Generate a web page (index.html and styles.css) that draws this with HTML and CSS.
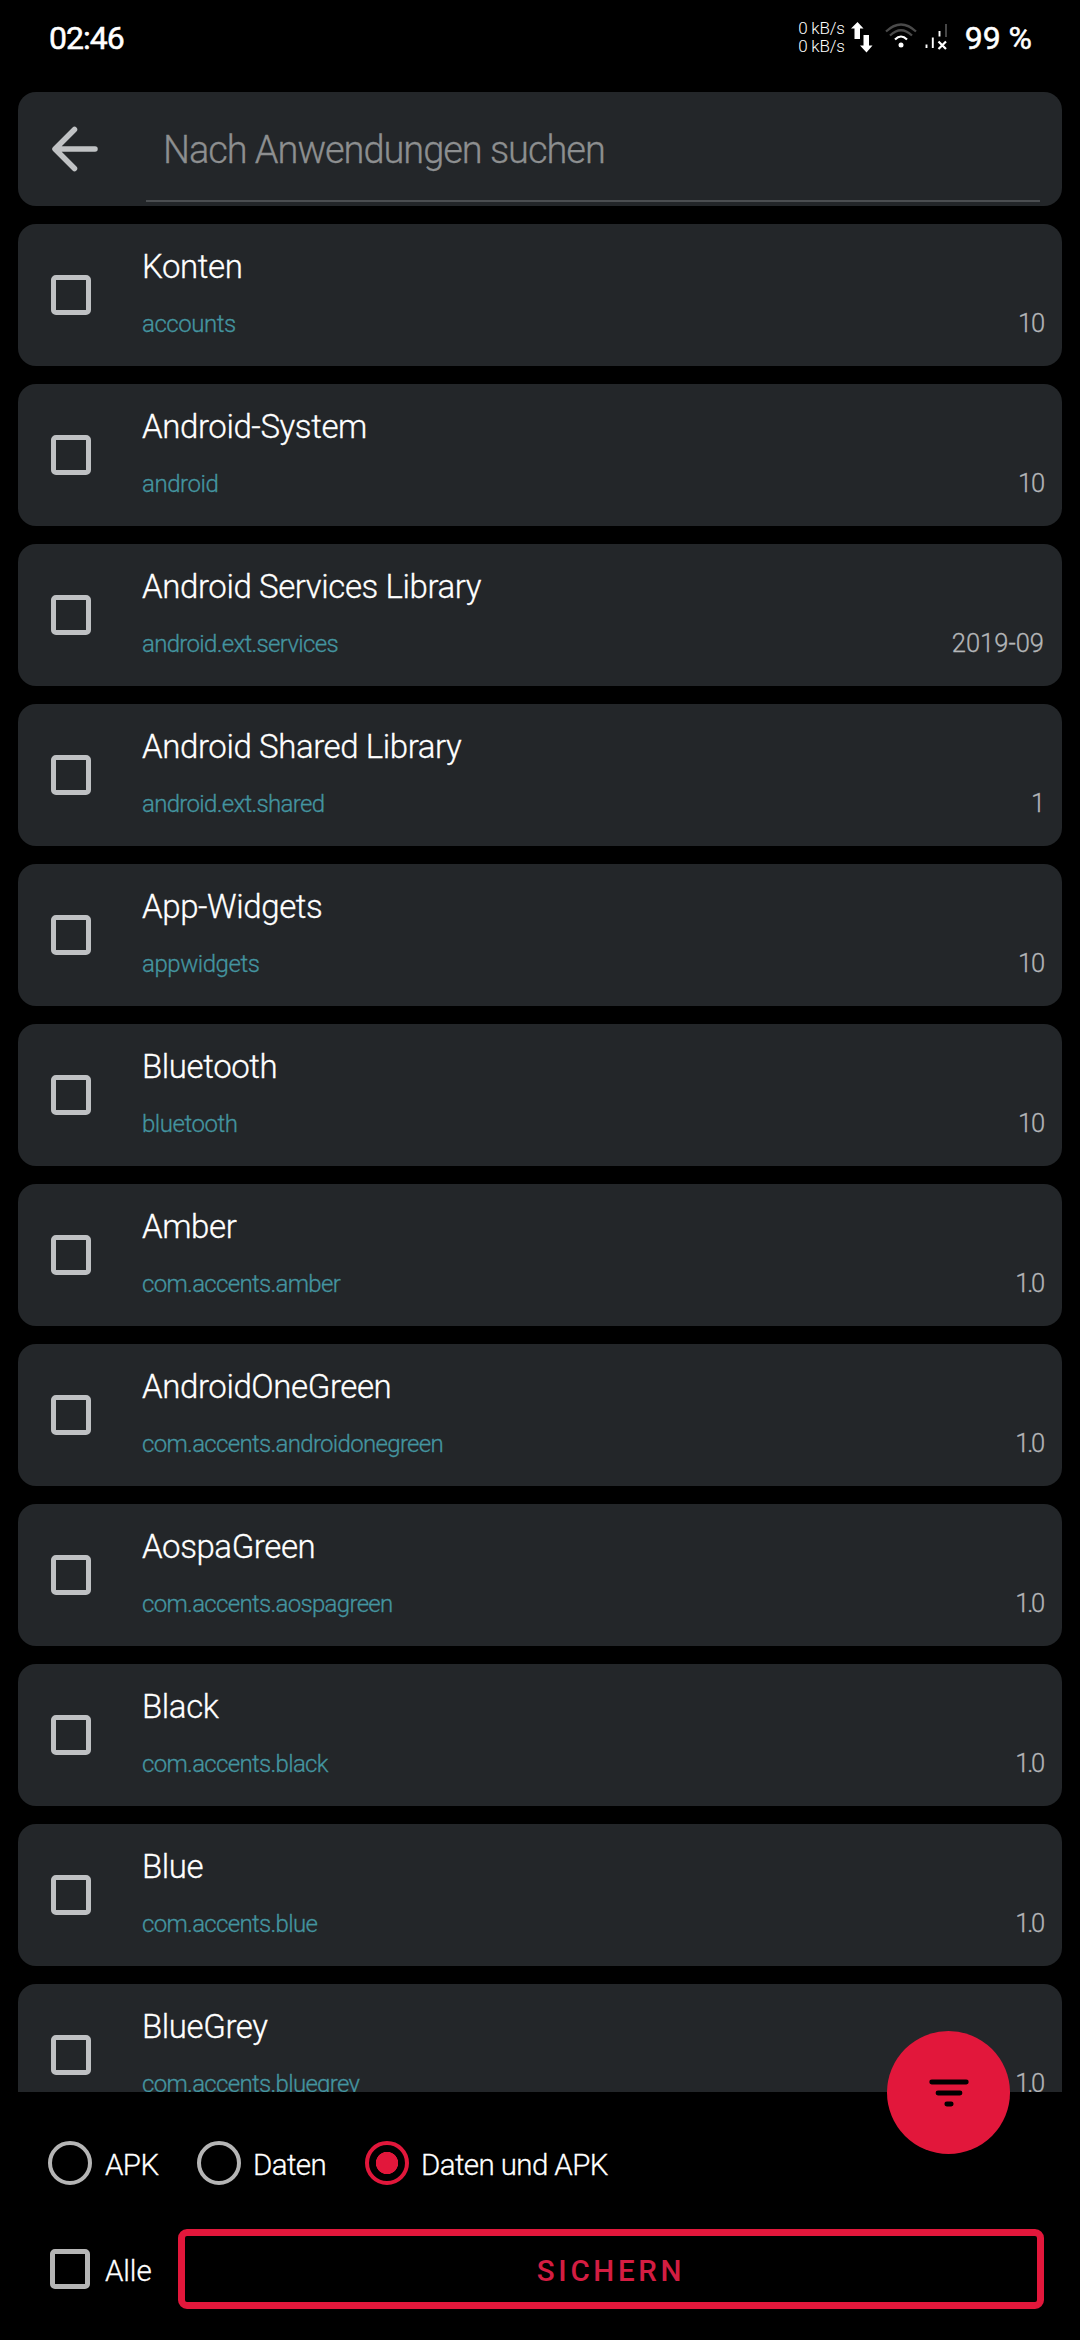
FILE: index.html
```
<!DOCTYPE html>
<html lang="de">
<head>
<meta charset="utf-8">
<title>Sichern</title>
<link rel="stylesheet" href="styles.css">
</head>
<body>
<div class="screen">
  <header class="status">
    <span class="clock">02:46</span>
    <div class="status-right">
      <div class="speed"><span>0 kB/s</span><span>0 kB/s</span></div>
      <svg class="arrows" width="22" height="32" viewBox="0 0 22 32" fill="#fff"><path d="M6.500 1 12.500 7.500H9V18H3.500V7.500H0zM12.500 14H18v10.500h3.500L15.500 31.500 9 24.500h3.500z"/></svg>
      <svg class="wifi" width="32" height="26" viewBox="0 0 32 26" fill="none" stroke-width="2.200"><path d="M1 8.500Q16-5.500 31 8.500" stroke="#4a4a4a"/><path d="M5 12.500Q16 2 27 12.500" stroke="#4a4a4a"/><path d="M10 16.500Q16 10.500 22 16.500" stroke="#fff"/><circle cx="16" cy="22" r="2.500" fill="#fff"/></svg>
      <svg class="signal" width="23" height="28" viewBox="0 0 23 28" fill="none" stroke="#fff" stroke-width="1.900"><path d="M1.500 21.500v3.500M7.800 14.500V25M14.500 8v5.500"/><path d="M21 1v13" stroke="#4a4a4a"/><path d="M13.500 18.500l7.500 7.500M21 18.500l-7.500 7.500" stroke-width="2.200"/></svg>
      <span class="battery">99 %</span>
    </div>
  </header>

  <div class="search">
    <svg class="back" width="48" height="48" viewBox="0 0 48 48" fill="none" stroke="#c0c2c4" stroke-width="5.500" stroke-linecap="round" stroke-linejoin="round"><path d="M23.500 4.500 4 24l19.500 19.500M5 24h39"/></svg>
    <div class="field">Nach Anwendungen suchen</div>
  </div>

  <main class="list">
    <div class="card"><i class="box"></i><div class="info"><div class="name">Konten</div><div class="meta"><span class="pkg">accounts</span><span class="ver">10</span></div></div></div>
    <div class="card"><i class="box"></i><div class="info"><div class="name">Android-System</div><div class="meta"><span class="pkg">android</span><span class="ver">10</span></div></div></div>
    <div class="card"><i class="box"></i><div class="info"><div class="name">Android Services Library</div><div class="meta"><span class="pkg accent">android.ext.services</span><span class="ver date">2019-09</span></div></div></div>
    <div class="card"><i class="box"></i><div class="info"><div class="name">Android Shared Library</div><div class="meta"><span class="pkg accent">android.ext.shared</span><span class="ver">1</span></div></div></div>
    <div class="card"><i class="box"></i><div class="info"><div class="name">App-Widgets</div><div class="meta"><span class="pkg">appwidgets</span><span class="ver">10</span></div></div></div>
    <div class="card"><i class="box"></i><div class="info"><div class="name">Bluetooth</div><div class="meta"><span class="pkg">bluetooth</span><span class="ver">10</span></div></div></div>
    <div class="card"><i class="box"></i><div class="info"><div class="name">Amber</div><div class="meta"><span class="pkg accent">com.accents.amber</span><span class="ver decimal">1.0</span></div></div></div>
    <div class="card"><i class="box"></i><div class="info"><div class="name">AndroidOneGreen</div><div class="meta"><span class="pkg accent">com.accents.androidonegreen</span><span class="ver decimal">1.0</span></div></div></div>
    <div class="card"><i class="box"></i><div class="info"><div class="name">AospaGreen</div><div class="meta"><span class="pkg accent">com.accents.aospagreen</span><span class="ver decimal">1.0</span></div></div></div>
    <div class="card"><i class="box"></i><div class="info"><div class="name">Black</div><div class="meta"><span class="pkg accent">com.accents.black</span><span class="ver decimal">1.0</span></div></div></div>
    <div class="card"><i class="box"></i><div class="info"><div class="name">Blue</div><div class="meta"><span class="pkg accent">com.accents.blue</span><span class="ver decimal">1.0</span></div></div></div>
    <div class="card"><i class="box"></i><div class="info"><div class="name">BlueGrey</div><div class="meta"><span class="pkg accent">com.accents.bluegrey</span><span class="ver decimal">1.0</span></div></div></div>
  </main>

  <footer class="footer">
    <div class="fab"><svg width="40" height="30" viewBox="0 0 40 30" stroke="#000" stroke-width="4.800" stroke-linecap="round"><path d="M2.700 4h34.600M9 15h22M17.800 26h4.400"/></svg></div>
    <div class="options">
      <div class="option first"><i class="radio"></i><span class="label">APK</span></div>
      <div class="option second"><i class="radio"></i><span class="label">Daten</span></div>
      <div class="option"><i class="radio on"></i><span class="label">Daten und APK</span></div>
    </div>
    <div class="actions">
      <div class="all"><i class="box"></i><span class="label">Alle</span></div>
      <div class="button"><span>SICHERN</span></div>
    </div>
  </footer>
</div>
</body>
</html>
```
FILE: styles.css
```
* { box-sizing: border-box; }
body { margin: 0; background: #000; }
.screen {
  width: 1080px;
  height: 2340px;
  display: flex;
  flex-direction: column;
  overflow: hidden;
  color: #fff;
  font-family: Roboto, sans-serif;
  font-weight: 300;
  white-space: nowrap;
  -webkit-text-stroke: 0.300px currentColor;
}
svg { display: block; flex: none; }

.status {
  height: 92px;
  padding: 19px 48px 0 49px;
  display: flex;
  justify-content: space-between;
  align-items: flex-start;
}
.clock, .battery {
  font-size: 32px;
  line-height: 38px;
  font-weight: 400;
  -webkit-text-stroke-width: 0.500px;
}
.clock { letter-spacing: -1px; }
.status-right { display: flex; align-items: flex-start; }
.speed {
  display: flex;
  flex-direction: column;
  font-size: 17px;
  line-height: 18px;
  letter-spacing: -0.200px;
  -webkit-text-stroke-width: 0;
}
.arrows { margin: 2px 0 0 6px; }
.wifi { margin: 4px 0 0 12px; }
.signal { margin: 4px 0 0 8px; }
.battery { margin-left: 17px; }

.search {
  width: 1044px;
  height: 114px;
  margin: 0 auto 18px;
  padding: 0 22px 0 33px;
  display: flex;
  align-items: center;
  flex: none;
  background: #232629;
  border-radius: 18px;
}
.field {
  flex: 1;
  height: 110px;
  margin: 0 0 4px 47px;
  padding-left: 17px;
  border-bottom: 2px solid #4b4e51;
  color: #8d8f90;
  font-size: 38px;
  line-height: 116px;
  letter-spacing: -1.050px;
}

.list {
  height: 1868px;
  flex: none;
  padding: 0 18px;
  display: flex;
  flex-direction: column;
  gap: 18px;
  overflow: hidden;
}
.card {
  height: 142px;
  flex: none;
  padding: 0 18px 0 33px;
  display: flex;
  align-items: center;
  background: #232629;
  border-radius: 18px;
}
.box {
  width: 40px;
  height: 40px;
  flex: none;
  border: 5px solid #bfc1c3;
  border-radius: 5px;
}
.info {
  flex: 1;
  align-self: flex-start;
  margin-left: 51px;
  padding-top: 24px;
}
.name { font-size: 33px; line-height: 38px; letter-spacing: -0.400px; }
.meta {
  margin-top: 22px;
  display: flex;
  justify-content: space-between;
  font-size: 25.500px;
  line-height: 30px;
}
.pkg {
  padding-top: 1px;
  color: #4495a0;
  font-size: 24px;
  letter-spacing: -0.450px;
}
.pkg.accent { letter-spacing: -0.680px; }
.ver { color: #b4b6b8; letter-spacing: -1.200px; }
.ver.date { letter-spacing: 0; }
.ver.decimal { letter-spacing: -2.200px; margin-right: 1px; }

.footer {
  position: relative;
  height: 248px;
  flex: none;
  padding: 49px 36px 0 48px;
}
.fab {
  position: absolute;
  top: -61px;
  right: 70px;
  width: 123px;
  height: 123px;
  display: flex;
  align-items: center;
  justify-content: center;
  background: #e2173b;
  border-radius: 50%;
}
.label {
  padding-top: 4px;
  font-size: 29.500px;
  line-height: 36px;
  letter-spacing: -0.600px;
}
.options { display: flex; height: 44px; }
.option { display: flex; align-items: center; gap: 12px; }
.first { width: 149px; gap: 13px; }
.second { width: 168px; }
.radio {
  width: 44px;
  height: 44px;
  flex: none;
  border: 4px solid #b5b5b5;
  border-radius: 50%;
}
.radio.on {
  border-color: #e2173b;
  background: radial-gradient(circle, #e2173b 10.800px, transparent 11.500px);
}
.actions { display: flex; height: 80px; margin-top: 44px; }
.all { width: 130px; display: flex; align-items: center; gap: 15px; padding-left: 2px; }
.all .box { border-color: #b5b5b5; }
.all .label { letter-spacing: -0.100px; }
.button {
  flex: 1;
  display: flex;
  align-items: center;
  justify-content: center;
  border: 7px solid #e2173b;
  border-radius: 9px;
  color: #d41d42;
  font-size: 29.500px;
  font-weight: 500;
  letter-spacing: 3.700px;
  -webkit-text-stroke-width: 0;
}
.button span { padding-top: 4px; }
```
